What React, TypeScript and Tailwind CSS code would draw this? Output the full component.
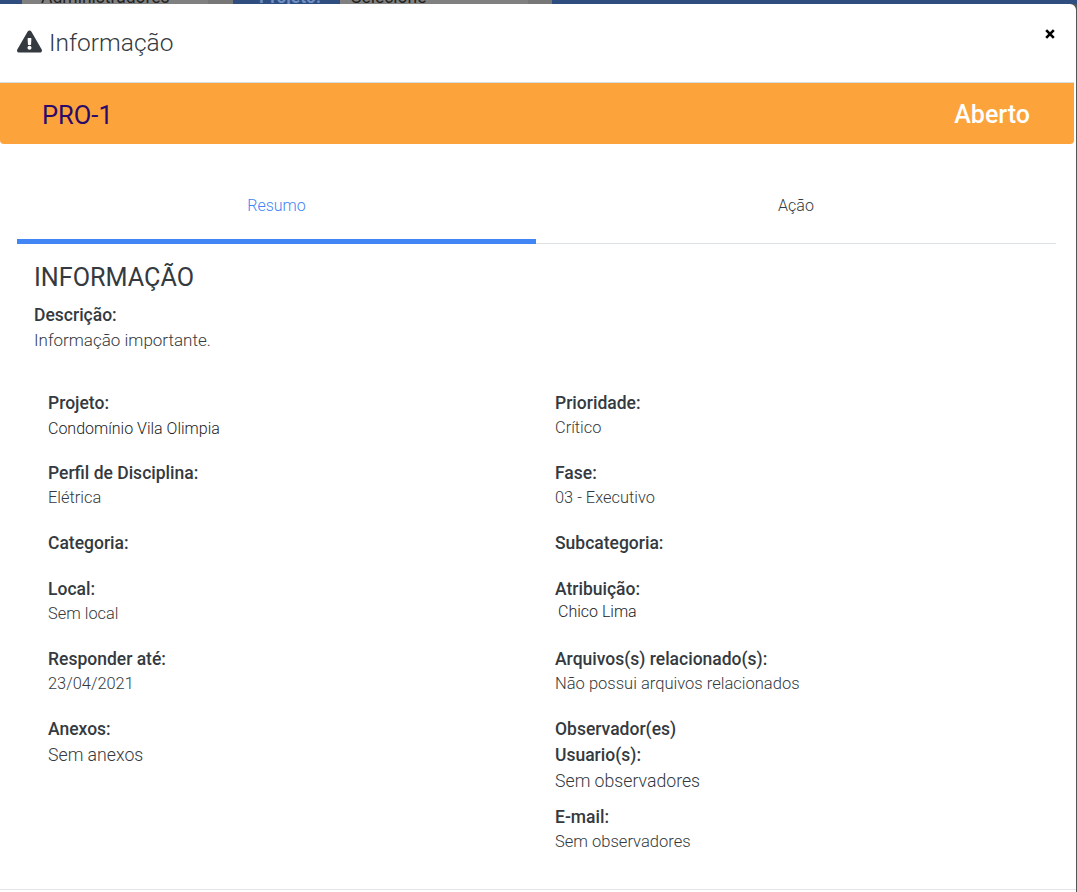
import { FaExclamationTriangle } from "react-icons/fa";

function Field({ label, value, valueClass = "h-[24px] pt-[1px] text-[16.4px] font-light leading-[24px] text-[#343a40]" }: { label: string; value?: string; valueClass?: string }) {
  return (
    <div>
      <div className="text-[17.5px] font-medium leading-[24px] text-[#343a40]">{label}</div>
      {value && <div className={valueClass}>{value}</div>}
    </div>
  );
}

export default function App() {
  return (
    <div className="h-[892px] w-[1077px] overflow-hidden bg-[#555] font-['Roboto',sans-serif]">
      <div className="flex h-[4px] overflow-hidden bg-[#2f4d7f] text-[17.5px] leading-[20px] text-[#222]">
        <div className="ml-[22px] h-full w-[186px] bg-[#808080] pl-[19px]"><span className="relative -top-[13px]">Administradores</span></div>
        <div className="h-full w-[25px] bg-[#777]" />
        <div className="h-full w-[107px] pl-[26px] text-[#6d8fc4]"><span className="relative -top-[13px] font-bold">Projeto:</span></div>
        <div className="h-full w-[188px] bg-[#808080] pl-[11px]"><span className="relative -top-[13px]">Selecione</span></div>
        <div className="h-full w-[24px] bg-[#777]" />
      </div>
      <div className="h-[888px] w-[1076px] rounded-tr-[6px] bg-white">
        <div className="relative flex h-[79px] w-[1074px] items-center border-b border-[#d5dde0] pl-[17px]">
          <FaExclamationTriangle size={25} className="-mt-[3px] mr-[7px] text-[#343a40]" />
          <span className="-mt-[1px] text-[24.5px] font-light leading-[30px] text-[#343a40]">Informação</span>
          <svg width="10" height="10" viewBox="0 0 10 10" className="absolute left-[1045px] top-[25px]">
            <path d="M1.2 1.2 L8.8 8.8 M8.8 1.2 L1.2 8.8" stroke="#000" strokeWidth="2.6" />
          </svg>
        </div>
        <div className="flex h-[61px] w-[1074px] items-center justify-between rounded-b-[4px] bg-[#fda33b] pl-[42px] pr-[44px] pt-[2px]">
          <span className="text-[25.5px] leading-[30px] text-[#2a0a6b]">PRO-1</span>
          <span className="pt-[1px] text-[25px] font-medium leading-[30px] text-white">Aberto</span>
        </div>
        <div className="ml-[17px] mt-[36px] flex h-[64px] w-[1039px] border-b border-[#dee2e6] text-[16px] font-light leading-[20px]">
          <div className="-mb-px flex w-[519px] justify-center border-b-[5px] border-[#4285f4] pt-[16px] text-[#4285f4]">Resumo</div>
          <div className="flex w-[520px] justify-center pt-[16px] text-[#343a40]">Ação</div>
        </div>
        <div className="h-[646px] border-b border-[#e5e5e5] pl-[34px] pt-[19px]">
          <h2 className="text-[25.2px] font-normal leading-[30px] text-[#343a40]">INFORMAÇÃO</h2>
          <div className="mt-[10px] text-[17.5px] font-medium leading-[24px] text-[#343a40]">Descrição:</div>
          <div className="mt-[1px] text-[17px] font-light leading-[24px] text-[#343a40]">Informação importante.</div>
          <div className="mt-[39px] grid grid-cols-[507px_1fr] pl-[14px]">
            <div className="flex flex-col gap-[22px]">
              <Field label="Projeto:" value="Condomínio Vila Olimpia" valueClass="h-[24px] pt-[2px] text-[16px] font-light leading-[24px] text-[#222]" />
              <Field label="Perfil de Disciplina:" value="Elétrica" />
              <Field label="Categoria:" />
              <Field label="Local:" value="Sem local" />
              <Field label="Responder até:" value="23/04/2021" />
              <Field label="Anexos:" value="Sem anexos" valueClass="mt-[2px] text-[17.7px] font-light leading-[24px] text-[#343a40]" />
            </div>
            <div className="flex flex-col">
              <Field label="Prioridade:" value="Crítico" />
              <div className="mt-[22px]"><Field label="Fase:" value="03 - Executivo" /></div>
              <div className="mt-[22px]"><Field label="Subcategoria:" /></div>
              <div className="mt-[22px]"><Field label="Atribuição:" value="Chico Lima" valueClass="-mt-[1px] h-[25px] pl-[3px] text-[16px] font-light leading-[24px] text-[#222]" /></div>
              <div className="mt-[22px]"><Field label="Arquivos(s) relacionado(s):" value="Não possui arquivos relacionados" valueClass="h-[24px] pt-[1px] text-[16.55px] font-light leading-[24px] text-[#343a40]" /></div>
              <div className="mt-[22px] text-[17.5px] font-medium leading-[24px] text-[#343a40]">Observador(es)</div>
              <div className="mt-[2px]"><Field label="Usuario(s):" value="Sem observadores" valueClass="mt-[2px] text-[17.7px] font-light leading-[24px] text-[#343a40]" /></div>
              <div className="mt-[12px]"><Field label="E-mail:" value="Sem observadores" valueClass="h-[24px] pt-[1px] text-[16.55px] font-light leading-[24px] text-[#343a40]" /></div>
            </div>
          </div>
        </div>
      </div>
    </div>
  );
}
